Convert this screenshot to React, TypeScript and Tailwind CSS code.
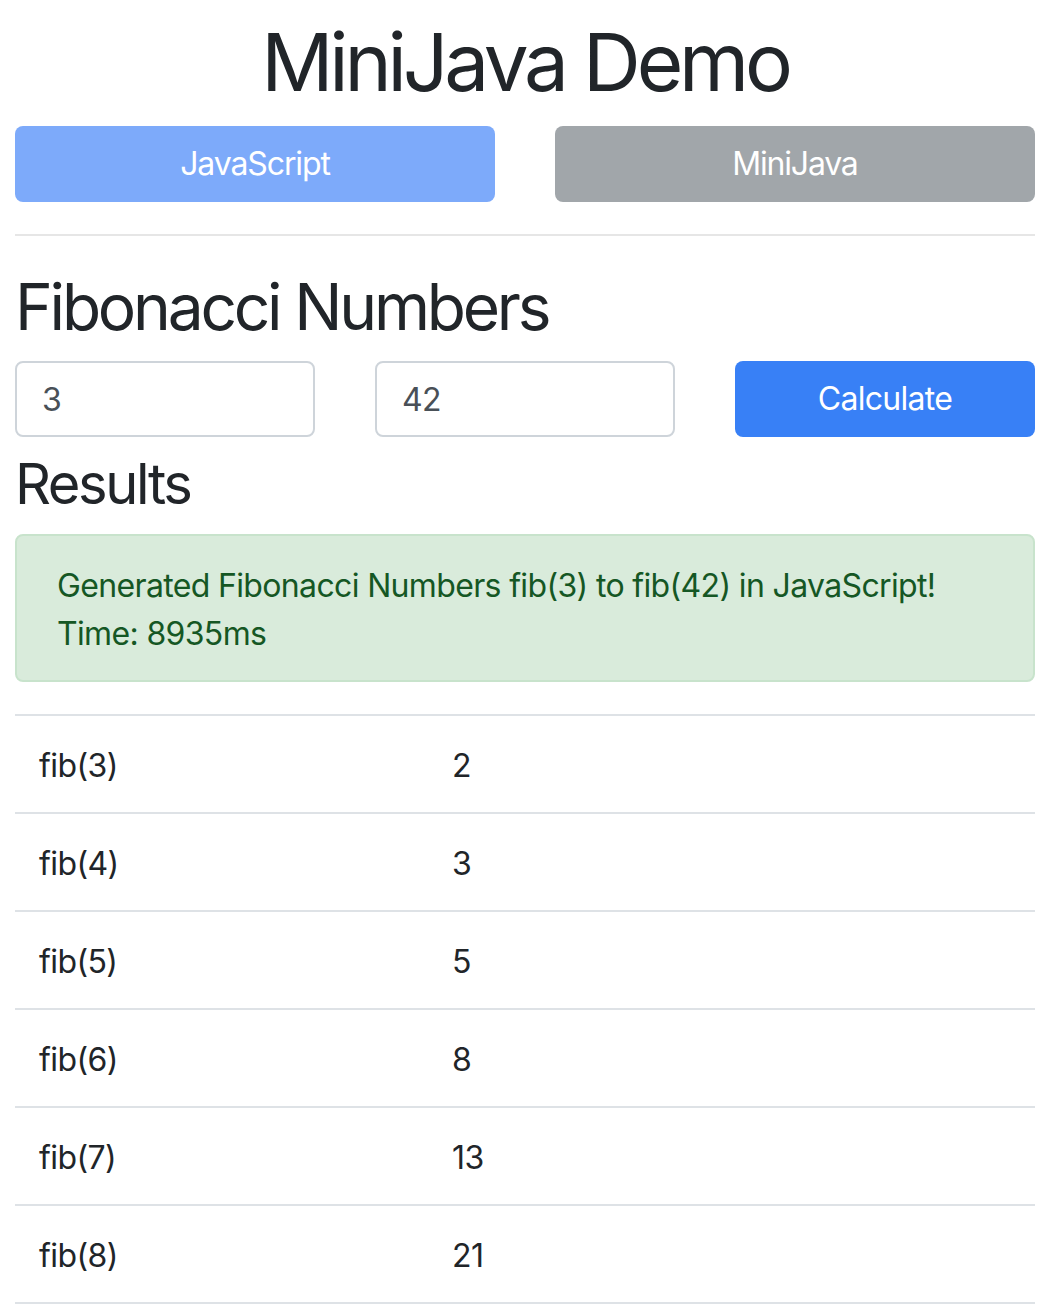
export default function App() {
  const rows = [
    ["fib(3)", "2"],
    ["fib(4)", "3"],
    ["fib(5)", "5"],
    ["fib(6)", "8"],
    ["fib(7)", "13"],
    ["fib(8)", "21"],
  ];
  return (
    <div className="min-h-[1309px] bg-white px-[15px] pt-[14px] text-[#212529] tracking-[-0.6px]" style={{ fontFamily: "Inter, 'Noto Sans', sans-serif" }}>
      <h1 className="text-center text-[80px] leading-[96px] font-normal mb-[16px] tracking-[-4.2px]">MiniJava Demo</h1>
      <div className="grid grid-cols-2 gap-[60px]">
        <button className="h-[76px] rounded-[8px] bg-[#7daafa] text-white text-[32px] tracking-[-1.1px]">JavaScript</button>
        <button className="h-[76px] rounded-[8px] bg-[#a1a6aa] text-white text-[32px] tracking-[-1.2px]">MiniJava</button>
      </div>
      <hr className="my-[32px] border-0 border-t-2 border-[#e6e6e6]" />
      <h2 className="text-[64px] leading-[77px] mb-[16px] tracking-[-3.2px]">Fibonacci Numbers</h2>
      <div className="grid grid-cols-3 gap-[60px]">
        <div className="h-[76px] rounded-[8px] border-2 border-[#ced4da] flex items-center px-[25px] pt-[2px] text-[32px] text-[#495057]">3</div>
        <div className="h-[76px] rounded-[8px] border-2 border-[#ced4da] flex items-center px-[25px] pt-[2px] text-[32px] text-[#495057]">42</div>
        <button className="h-[76px] rounded-[8px] bg-[#3880f6] text-white text-[32px] tracking-[-0.7px]">Calculate</button>
      </div>
      <h3 className="mt-[14px] text-[56px] leading-[67px] mb-[16px] tracking-[-2.4px]">Results</h3>
      <div className="rounded-[8px] border-2 border-[#c8e3cc] bg-[#d9ebdb] px-[40px] pt-[26px] pb-[22px] text-[#155724] text-[32px] leading-[48px] mb-[32px] tracking-[-0.65px]">
        <div>Generated Fibonacci Numbers fib(3) to fib(42) in JavaScript!</div>
        <div>Time: 8935ms</div>
      </div>
      <div className="border-t-2 border-[#dee2e6]">
        {rows.map(([a, b]) => (
          <div key={a} className="flex h-[98px] items-center pt-[4px] border-b-2 border-[#dee2e6] text-[32px]">
            <div className="w-[437px] pl-[24px]">{a}</div>
            <div>{b}</div>
          </div>
        ))}
      </div>
    </div>
  );
}
